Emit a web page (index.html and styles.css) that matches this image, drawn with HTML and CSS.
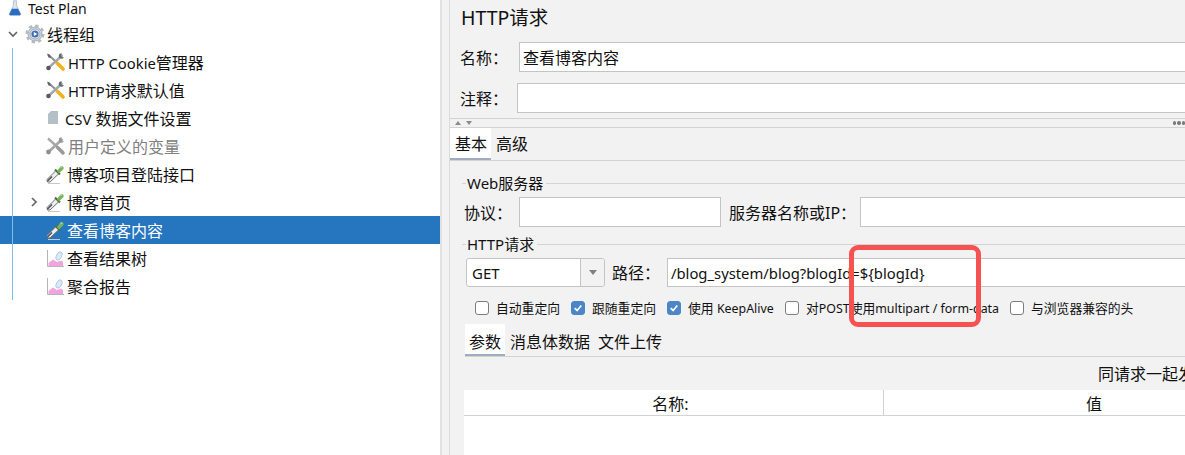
FILE: index.html
```html
<!DOCTYPE html>
<html lang="zh">
<head>
<meta charset="utf-8">
<title>HTTP请求</title>
<link rel="stylesheet" href="styles.css">
</head>
<body>
<svg class="defs" width="0" height="0" aria-hidden="true">
  <symbol id="i-tools" viewBox="0 0 20 20">
    <path d="M3 2.5 L18 16" stroke="#8b8f93" stroke-width="2" fill="none"/>
    <path d="M12.5 11.5 L18 17" stroke="#f2b418" stroke-width="3.6" stroke-linecap="round" fill="none"/>
    <path d="M2 1.5 L5 3 L6 6 L3.5 5.5 Z" fill="#5d6367"/>
    <path d="M17.5 3 L4 15.5" stroke="#a3a8ad" stroke-width="2.4" fill="none"/>
    <path d="M15 1.5 A3.4 3.4 0 0 0 14.5 6 A3.4 3.4 0 0 0 19 5.5 L17 5 L16 3.5 L17 1.5 Z" fill="#63696d"/>
    <circle cx="3.5" cy="16" r="2.3" fill="#555a5e"/>
  </symbol>
  <symbol id="i-tools-off" viewBox="0 0 20 20">
    <path d="M3 2.5 L18 16" stroke="#a8a8a8" stroke-width="2.4" fill="none"/>
    <path d="M12.5 11.5 L18 17" stroke="#9a9a9a" stroke-width="3.4" stroke-linecap="round" fill="none"/>
    <path d="M17.5 3 L4 15.5" stroke="#a6a6a6" stroke-width="2.6" fill="none"/>
    <path d="M15 1.5 A3.4 3.4 0 0 0 14.5 6 A3.4 3.4 0 0 0 19 5.5 L17 5 L16 3.5 L17 1.5 Z" fill="#979797"/>
    <circle cx="3.5" cy="16" r="2.4" fill="#8f8f8f"/>
  </symbol>
  <symbol id="i-drop" viewBox="0 0 20 20">
    <path d="M2 15.5 L11 6.5 L14 9.5 L5 18 L2.5 18 Z" fill="#ececec" stroke="#6a6e71" stroke-width="1"/>
    <path d="M2.5 17 L7 12.5" stroke="#4a4f52" stroke-width="1.5"/>
    <path d="M10 5.5 L15 10.5" stroke="#4f6f44" stroke-width="2"/>
    <path d="M12 7 L15.5 2.5 A2 2 0 0 1 18.5 5 L14 9.5 Z" fill="#78b45a"/>
    <path d="M15.5 3.5 L17 2.8" stroke="#c4e3b0" stroke-width="1.2"/>
    <path d="M3 19.5 L15 19.5" stroke="#c9c9c9" stroke-width="1"/>
  </symbol>
  <symbol id="i-graph" viewBox="0 0 20 20">
    <path d="M2.5 2 V18.5 H19" stroke="#b4b4b4" fill="none"/>
    <path d="M3.5 18 V15 L8 11.5 L12 14 L16 12.5 L18 14 V18 Z" fill="#f2a5dc"/>
    <ellipse cx="14" cy="8" rx="2.6" ry="4.4" transform="rotate(25 14 8)" fill="#dbe9f6" stroke="#a5c2de" stroke-width=".8"/>
  </symbol>
  <symbol id="i-file" viewBox="0 0 12 16">
    <path d="M4 1 H11 V14 H1 V4 Z" fill="#b4bfc7"/>
  </symbol>
  <symbol id="i-flask" viewBox="0 0 20 20">
    <path d="M8 1 H12 V7 L17 17 Q17.5 19 16 19 H4 Q2.5 19 3 17 L8 7 Z" fill="#dfe6ee" stroke="#9aa2ac" stroke-width=".7"/>
    <path d="M6.2 11 H13.8 L17 17.5 Q17 19 16 19 H4 Q3 19 3 17.5 Z" fill="#2a6ec4"/>
  </symbol>
  <symbol id="i-gear" viewBox="0 0 20 20">
    <circle cx="10" cy="10" r="7" fill="#d4d9df" stroke="#a4abb4" stroke-width="1"/>
    <circle cx="10" cy="10" r="8" fill="none" stroke="#b3bac2" stroke-width="3" stroke-dasharray="3.2 3.08"/>
    <circle cx="10" cy="10" r="5" fill="#eef2f7" stroke="#8d98a5" stroke-width=".8"/>
    <circle cx="10" cy="10" r="3.6" fill="#3f70b4"/>
    <path d="M8.8 8 L12.4 10 L8.8 12 Z" fill="#fff"/>
  </symbol>
</svg>

<div class="app">
  <nav class="tree">
    <div class="row plan"><svg class="ico flask"><use href="#i-flask"/></svg><span>Test Plan</span></div>
    <div class="row lvl1">
      <svg class="twist" viewBox="0 0 10 10"><path d="M1 3 L5 7 L9 3" fill="none" stroke="#666" stroke-width="1.7"/></svg>
      <svg class="ico"><use href="#i-gear"/></svg><span>线程组</span>
    </div>
    <div class="group">
      <div class="row"><svg class="ico"><use href="#i-tools"/></svg><span><b class="lat">HTTP Cookie</b>管理器</span></div>
      <div class="row"><svg class="ico"><use href="#i-tools"/></svg><span><b class="lat">HTTP</b>请求默认值</span></div>
      <div class="row"><svg class="ico-file"><use href="#i-file"/></svg><span><b class="lat">CSV</b> 数据文件设置</span></div>
      <div class="row off"><svg class="ico"><use href="#i-tools-off"/></svg><span>用户定义的变量</span></div>
      <div class="row"><svg class="ico drop"><use href="#i-drop"/></svg><span>博客项目登陆接口</span></div>
      <div class="row has-twist">
        <svg class="twist-r" viewBox="0 0 10 10"><path d="M3 1 L7 5 L3 9" fill="none" stroke="#666" stroke-width="1.7"/></svg>
        <svg class="ico drop"><use href="#i-drop"/></svg><span>博客首页</span>
      </div>
      <div class="row selected"><svg class="ico drop"><use href="#i-drop"/></svg><span>查看博客内容</span></div>
      <div class="row"><svg class="ico drop"><use href="#i-graph"/></svg><span>查看结果树</span></div>
      <div class="row"><svg class="ico drop"><use href="#i-graph"/></svg><span>聚合报告</span></div>
    </div>
  </nav>

  <div class="splitter"></div>

  <main class="panel">
    <h1 class="title">HTTP请求</h1>
    <div class="form-row name-row"><label class="lab">名称：</label><div class="field">查看博客内容</div></div>
    <div class="form-row note-row"><label class="lab">注释：</label><div class="field"></div></div>

    <div class="divider">
      <span class="arrows"><i class="up"></i><i class="down"></i></span>
      <span class="dots"><i></i><i></i><i></i></span>
    </div>

    <div class="tabs">
      <div class="tab on">基本</div>
      <div class="tab">高级</div>
    </div>

    <section class="legend web-legend"><span>Web服务器</span></section>
    <div class="server-row">
      <label class="lab proto">协议：</label>
      <div class="field proto-f"></div>
      <label class="lab host">服务器名称或IP：</label>
      <div class="field host-f"></div>
    </div>

    <section class="legend http-legend"><span>HTTP请求</span></section>
    <div class="path-row">
      <div class="select"><span class="sel-v">GET</span><span class="sel-b"><i></i></span></div>
      <label class="lab path">路径：</label>
      <div class="field path-f">/blog_system/blog?blogId=${blogId}</div>
    </div>

    <div class="checks">
      <div class="chk c1"><span class="box"></span><span>自动重定向</span></div>
      <div class="chk c2"><span class="box on"><svg viewBox="0 0 14 14"><path d="M3.2 7.2 L6 10 L10.8 4" fill="none" stroke="#fff" stroke-width="2"/></svg></span><span>跟随重定向</span></div>
      <div class="chk c3"><span class="box on"><svg viewBox="0 0 14 14"><path d="M3.2 7.2 L6 10 L10.8 4" fill="none" stroke="#fff" stroke-width="2"/></svg></span><span>使用 <b class="lat-s">KeepAlive</b></span></div>
      <div class="chk c4"><span class="box"></span><span>对<b class="lat-s">POST</b>使用<b class="lat-s">multipart / form-data</b></span></div>
      <div class="chk c5"><span class="box"></span><span>与浏览器兼容的头</span></div>
    </div>

    <div class="subtabs">
      <div class="subtab on">参数</div>
      <div class="subtab">消息体数据</div>
      <div class="subtab">文件上传</div>
    </div>

    <div class="send-note">同请求一起发送参数：</div>

    <div class="table">
      <div class="th first">名称:</div>
      <div class="th">值</div>
    </div>
  </main>
</div>

<div class="mark"></div>
</body>
</html>
```

FILE: styles.css
```css
* { box-sizing: border-box; }
html, body { margin: 0; padding: 0; }
body {
  width: 1185px;
  height: 455px;
  overflow: hidden;
  position: relative;
  background: #f2f2f2;
  color: #111;
  font: 16px/22px "Noto Sans", "Noto Sans CJK SC", sans-serif;
}
.defs { position: absolute; }
.app { display: flex; height: 455px; }
.lat { font-weight: 400; font-size: 14.8px; }
.lat-s { font-weight: 400; font-size: 12.4px; }

/* tree */
.tree {
  flex: none;
  width: 440px;
  height: 455px;
  background: #fff;
  overflow: hidden;
}
.row {
  display: flex;
  align-items: center;
  height: 28px;
  padding-left: 45px;
  white-space: nowrap;
}
.row > span { position: relative; top: 1px; }
.row.plan {
  height: 20px;
  padding: 0 0 4px 6px;
  font-size: 14px;
  line-height: 16px;
}
.ico { flex: none; width: 20px; height: 20px; margin-right: 3px; }
.drop { margin-right: 2px; }
.flask { width: 18px; height: 16px; margin-right: 4px; }
.ico-file { flex: none; width: 12px; height: 16px; margin: 0 6px 0 2px; }
.row.lvl1 { padding-left: 8px; }
.twist { flex: none; width: 10px; height: 10px; margin-right: 7px; }
.lvl1 .ico { margin-right: 2px; }
.has-twist { padding-left: 29px; }
.twist-r { flex: none; width: 10px; height: 10px; margin-right: 6px; }
.off { color: #808080; }
.selected { background: #2675bf; color: #fff; }
.group { position: relative; }
.group::before {
  content: "";
  position: absolute;
  left: 12px;
  top: 0;
  bottom: 0;
  width: 1px;
  background: #7fbdf0;
  z-index: 1;
}

/* splitter */
.splitter {
  flex: none;
  width: 10px;
  border-left: 2px solid #e2e2e2;
  border-right: 1px solid #dcdcdc;
  background: #f2f2f2;
}

/* right panel */
.panel {
  flex: 1;
  min-width: 0;
  height: 455px;
  overflow: hidden;
}
.title {
  margin: 0;
  height: 42px;
  padding: 5px 0 0 11px;
  font-size: 19.5px;
  line-height: 26px;
  font-weight: 400;
}
.form-row { display: flex; align-items: stretch; height: 30px; }
.note-row { margin-top: 11px; }
.name-row .lab { width: 69px; padding-left: 10px; }
.note-row .lab { width: 67px; padding-left: 10px; }
.lab { flex: none; line-height: 32px; white-space: nowrap; }
.field {
  flex: 1;
  min-width: 0;
  height: 30px;
  line-height: 31px;
  padding-left: 3px;
  background: #fff;
  border: 1px solid #c4c4c4;
  border-right: 0;
  white-space: nowrap;
}
.divider {
  display: flex;
  align-items: center;
  justify-content: space-between;
  height: 10px;
  margin-top: 5px;
  border-top: 1px solid #d2d2d2;
  border-bottom: 1px solid #d2d2d2;
}
.arrows { display: flex; gap: 5px; margin-left: 5px; }
.arrows i { width: 0; height: 0; border-left: 3.5px solid transparent; border-right: 3.5px solid transparent; }
.arrows .up { border-bottom: 4px solid #8a8a8a; }
.arrows .down { border-top: 4px solid #8a8a8a; }
.dots { display: flex; gap: 1px; }
.dots i { width: 3.5px; height: 3.5px; border-radius: 50%; background: #7a7a7a; }

.tabs {
  display: flex;
  height: 33px;
  border-bottom: 1px solid #d2d2d2;
}
.tab { width: 41px; height: 32px; padding: 5px 0 0 5px; line-height: 22px; white-space: nowrap; }
.tab.on { background: #fff; border-bottom: 2px solid #a0adc0; }

.legend {
  display: flex;
  align-items: center;
  height: 22px;
  margin-left: 12px;
  white-space: nowrap;
}
.legend::before { content: ""; flex: none; width: 4px; height: 1px; margin-right: 1px; background: #d4d4d4; }
.legend::after { content: ""; flex: 1; height: 1px; margin-left: 3px; background: #d4d4d4; }
.legend span { font-size: 15px; }
.web-legend { margin-top: 11px; }
.server-row { display: flex; height: 30px; margin-top: 3px; }
.proto { width: 69px; padding-left: 14px; }
.proto-f { flex: none; width: 202px; border-right: 1px solid #c4c4c4; }
.host { width: 139px; padding-left: 8px; }
.http-legend { margin-top: 6px; }
.path-row { display: flex; height: 30px; margin-top: 3px; padding-left: 16px; }
.select {
  flex: none;
  display: flex;
  width: 139px;
  height: 29px;
  background: #fff;
  border: 1px solid #c4c4c4;
  border-radius: 3px;
}
.sel-v { flex: 1; padding-left: 5px; line-height: 29px; font-size: 15px; }
.sel-b { flex: none; width: 24px; display: flex; align-items: center; justify-content: center; background: #f2f2f2; border-left: 1px solid #c4c4c4; border-radius: 0 3px 3px 0; }
.sel-b i { width: 0; height: 0; border-left: 4.5px solid transparent; border-right: 4.5px solid transparent; border-top: 5px solid #808080; }
.path { width: 62px; padding-left: 7px; line-height: 30px; }
.path-f { height: 29px; line-height: 29px; font-size: 14.8px; }

.checks {
  display: flex;
  align-items: center;
  height: 20px;
  margin-top: 10px;
  padding-left: 25px;
  font-size: 12.8px;
  white-space: nowrap;
}
.chk { flex: none; display: flex; align-items: center; gap: 7px; }
.c1 { width: 96px; }
.c2 { width: 96px; }
.c3 { width: 118px; }
.c4 { width: 225px; }
.box {
  flex: none;
  width: 14px;
  height: 14px;
  background: #fff;
  border: 1px solid #7d7d7d;
  border-radius: 3px;
}
.box.on { background: #4a86c8; border-color: #4a86c8; }
.box svg { display: block; width: 12px; height: 12px; }

.subtabs {
  display: flex;
  height: 33px;
  margin-top: 6px;
  margin-left: 15px;
  border-bottom: 1px solid #d2d2d2;
  white-space: nowrap;
}
.subtab { height: 32px; padding: 7px 4px 0; line-height: 22px; margin-right: 1px; }
.subtab:nth-child(2) { margin-right: 0; }
.subtab.on { width: 40px; background: #fff; border-bottom: 2px solid #a0adc0; }
.send-note { height: 33px; padding-left: 648px; line-height: 35px; white-space: nowrap; }
.table {
  display: grid;
  grid-template-columns: 420px 420px;
  width: 840px;
  height: 65px;
  margin-left: 14px;
  background: #fff;
  align-content: start;
}
.th {
  height: 26px;
  line-height: 28px;
  text-align: center;
  border-bottom: 1px solid #d2d2d2;
}
.first { padding-right: 6px; border-right: 1px solid #d2d2d2; }

/* hand-drawn annotation above the screenshot */
.mark {
  position: absolute;
  left: 849px;
  top: 245px;
  width: 132px;
  height: 82px;
  border: 5px solid #f55252;
  border-radius: 9px;
}
```
